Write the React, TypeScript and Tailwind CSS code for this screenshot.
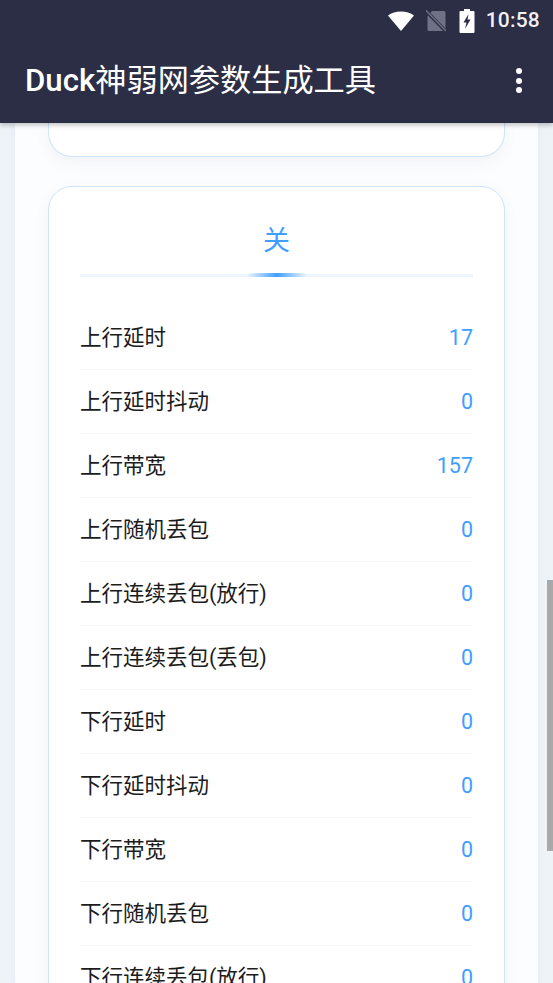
const rows: [string, string][] = [
  ["上行延时", "17"],
  ["上行延时抖动", "0"],
  ["上行带宽", "157"],
  ["上行随机丢包", "0"],
  ["上行连续丢包(放行)", "0"],
  ["上行连续丢包(丢包)", "0"],
  ["下行延时", "0"],
  ["下行延时抖动", "0"],
  ["下行带宽", "0"],
  ["下行随机丢包", "0"],
  ["下行连续丢包(放行)", "0"],
];

function StatusIcons() {
  return (
    <div className="flex items-center pr-[13px]">
      <svg width="28" height="22" viewBox="0 0 28 22" className="mr-[11px]">
        <path d="M1 5.500C4.500 2.800 9 1.500 14 1.500s9.500 1.300 13 4L14 21z" fill="#fff" />
      </svg>
      <svg width="20" height="22" viewBox="0 0 20 22" className="mr-[13px]">
        <path d="M6 1h12a1.500 1.500 0 0 1 1.500 1.500V20a1 1 0 0 1-1 1H3a1.500 1.500 0 0 1-1.500-1.500V6z" fill="#6f7186" />
        <path d="M0 1l20 20.500" stroke="#2c2e45" strokeWidth="3.500" />
        <path d="M0 .5l20 20.500" stroke="#6f7186" strokeWidth="1.500" />
      </svg>
      <svg width="16" height="24" viewBox="0 0 16 24" className="mr-[11px]">
        <path d="M5 0h6v2h3.500a1 1 0 0 1 1 1v20a1 1 0 0 1-1 1h-13a1 1 0 0 1-1-1V3a1 1 0 0 1 1-1H5z" fill="#fff" />
        <path d="M9.500 5L4.500 13.500h3L6 20l5.500-9.500h-3z" fill="#2c2e45" />
      </svg>
      <span className="text-[21px] leading-none font-medium tracking-[0.2px] text-white/95">10:58</span>
    </div>
  );
}

export default function App() {
  return (
    <div className="relative flex h-[983px] w-[553px] flex-col overflow-hidden bg-[#eef3f8] font-['Roboto','Noto_Sans_CJK_SC',sans-serif]">
      <header className="relative z-10 h-[123px] shrink-0 bg-[#2c2e45] shadow-[0_2px_5px_rgba(0,0,0,0.25)]">
        <div className="flex h-[37px] items-center justify-end pt-1">
          <StatusIcons />
        </div>
        <div className="flex h-[86px] items-center justify-between pt-px pr-[31px] pl-[25px]">
          <h1 className="text-[31.2px] leading-none font-normal whitespace-nowrap text-white">
            <span className="font-medium">Duck</span>神弱网参数生成工具
          </h1>
          <div className="flex flex-col gap-[3.5px]">
            <span className="h-[6px] w-[6px] rounded-full bg-white" />
            <span className="h-[6px] w-[6px] rounded-full bg-white" />
            <span className="h-[6px] w-[6px] rounded-full bg-white" />
          </div>
        </div>
      </header>

      <main className="mx-[15px] flex min-h-0 flex-1 flex-col gap-[29px] overflow-hidden bg-[#fcfdfe] px-[33px] shadow-[0_0_6px_rgba(200,215,230,0.3)]">
        <div className="h-[34px] shrink-0 rounded-b-[24px] border border-t-0 border-[#cde5fe] bg-white shadow-[0_6px_14px_rgba(90,110,140,0.07)]" />

        <section className="shrink-0 rounded-[24px] border border-[#cde5fe] bg-white px-[31px] pt-[35px] shadow-[0_4px_14px_rgba(90,110,140,0.07)]">
          <h2 className="h-[38px] text-center text-[27px] leading-[38px] font-normal text-[#409eff]">关</h2>
          <div className="relative mt-[14px] h-[3px] bg-[#edf5fe]">
            <div className="absolute -top-px left-1/2 h-[4px] w-[60px] -translate-x-1/2 bg-gradient-to-r from-transparent via-[#409eff] to-transparent blur-[0.5px]" />
          </div>
          <div className="mt-[29px]">
            {rows.map(([label, value]) => (
              <div key={label} className="flex h-[64px] items-center justify-between border-b border-[#f5f8fc] text-[21.5px] leading-none">
                <span className="text-[#1c1c1c]">{label}</span>
                <span className="text-[#409eff]">{value}</span>
              </div>
            ))}
          </div>
        </section>
      </main>

      <div className="absolute top-[580px] right-0 h-[271px] w-[6px] bg-[#a9a9a9]" />
    </div>
  );
}
